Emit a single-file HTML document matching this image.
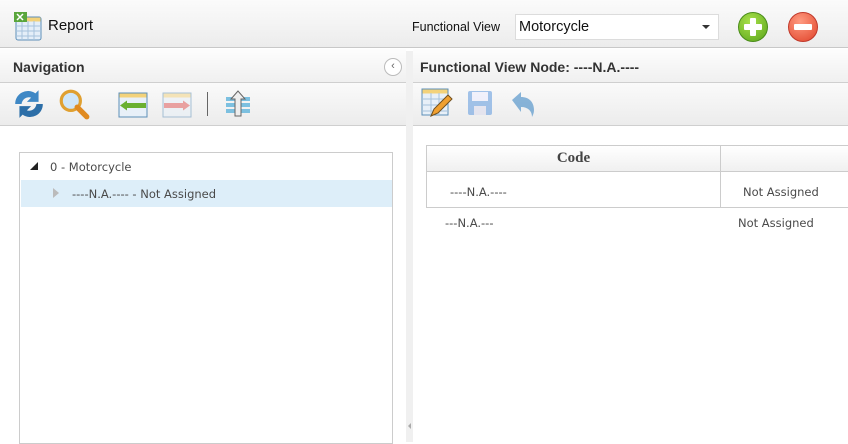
<!DOCTYPE html>
<html><head><style>
*{box-sizing:border-box;margin:0;padding:0}
body{width:848px;height:442px;overflow:hidden;background:#fff;font-family:"Liberation Sans",sans-serif;position:relative}
.a{position:absolute}
.top{left:0;top:0;width:848px;height:48px;background:linear-gradient(#fbfbfb,#ececec);border-bottom:1px solid #c8c8c8}
.hdr{background:linear-gradient(#fdfdfd,#f0f0f0);border-bottom:1px solid #cfcfcf}
.tb{background:linear-gradient(#fafafa,#ececec);border-bottom:1px solid #cfcfcf}
.t{color:#4a4a4a;font-family:"DejaVu Sans","Liberation Sans",sans-serif;font-size:11.5px}
</style></head><body>
<div class="a top"></div>
<svg class="a" style="left:13px;top:11px" width="30" height="30" viewBox="0 0 30 30">
<rect x="3" y="6" width="25" height="23" rx="2" fill="#e4eef8" stroke="#5d8fb8"/>
<rect x="3.5" y="6.5" width="24" height="4" fill="#f3d27a"/>
<g stroke="#a6c2dc"><line x1="3" y1="15" x2="28" y2="15"/><line x1="3" y1="20" x2="28" y2="20"/><line x1="3" y1="25" x2="28" y2="25"/><line x1="9" y1="10" x2="9" y2="29"/><line x1="15" y1="10" x2="15" y2="29"/><line x1="21" y1="10" x2="21" y2="29"/></g>
<rect x="1" y="1" width="13" height="10" fill="#5aa63c"/><path d="M4 3l6 6M10 3l-6 6" stroke="#fff" stroke-width="1.5"/>
</svg>
<div class="a" style="left:48px;top:17px;font-size:15px;color:#111">Report</div>
<div class="a" style="left:412px;top:20px;font-size:12.5px;color:#111">Functional View</div>
<div class="a" style="left:515px;top:14px;width:204px;height:26px;background:#fff;border:1px solid #dcdcdc;font-size:14.5px;padding:4px 0 0 3px;color:#111">Motorcycle</div>
<div class="a" style="left:702px;top:25px;border-left:4px solid transparent;border-right:4px solid transparent;border-top:4px solid #333"></div>
<div class="a" style="left:738px;top:12px;width:30px;height:30px;border-radius:50%;background:radial-gradient(circle at 40% 30%,#a8e04a,#5aa51a);border:1px solid #4a8c1a"></div>
<div class="a" style="left:750px;top:18px;width:6px;height:18px;background:#fff;border-radius:1px"></div>
<div class="a" style="left:744px;top:24px;width:18px;height:6px;background:#fff;border-radius:1px"></div>
<div class="a" style="left:788px;top:12px;width:30px;height:30px;border-radius:50%;background:radial-gradient(circle at 40% 30%,#ff9a80,#e0432a);border:1px solid #c0392b"></div>
<div class="a" style="left:794px;top:24px;width:18px;height:6px;background:#fff;border-radius:1px"></div>

<div class="a hdr" style="left:0;top:49px;width:406px;height:34px"></div>
<div class="a" style="left:13px;top:59px;font-size:14px;font-weight:bold;color:#333">Navigation</div>
<div class="a" style="left:384px;top:58px;width:18px;height:18px;border-radius:50%;border:1px solid #bbb;background:#fff;font-size:11px;color:#666;text-align:center;line-height:15px">&lsaquo;</div>
<div class="a tb" style="left:0;top:83px;width:406px;height:43px"></div>
<svg class="a" style="left:12px;top:87px" width="34" height="34" viewBox="0 0 32 32"><path d="M3 16a12 12 0 0 1 19-10l3-3v11h-11l4-4a7 7 0 0 0-9 6z" fill="#3f88c5"/><path d="M29 16a12 12 0 0 1-19 10l-3 3v-11h11l-4 4a7 7 0 0 0 9-6z" fill="#2d6fa8"/></svg>
<svg class="a" style="left:57px;top:87px" width="34" height="34" viewBox="0 0 32 32"><circle cx="13" cy="13" r="9" fill="#cfe6f8" stroke="#e0a030" stroke-width="3"/><path d="M19 19l9 9" stroke="#e08a20" stroke-width="5" stroke-linecap="round"/></svg>
<svg class="a" style="left:118px;top:92px" width="30" height="26" viewBox="0 0 30 26"><rect x="1" y="1" width="28" height="24" fill="#e8f0f8" stroke="#5d8fb8"/><rect x="1.5" y="1.5" width="27" height="4" fill="#f3d27a"/><rect x="8" y="11" width="20" height="5" fill="#6ab030"/><path d="M2 13.5l7-5v10z" fill="#6ab030"/></svg>
<svg class="a" style="left:162px;top:92px" width="30" height="26" viewBox="0 0 30 26" opacity=".5"><rect x="1" y="1" width="28" height="24" fill="#e8f0f8" stroke="#5d8fb8"/><rect x="1.5" y="1.5" width="27" height="4" fill="#f3d27a"/><rect x="2" y="11" width="20" height="5" fill="#e05050"/><path d="M28 13.5l-7-5v10z" fill="#e05050"/></svg>
<div class="a" style="left:207px;top:92px;width:1px;height:24px;background:#666"></div>
<svg class="a" style="left:223px;top:89px" width="30" height="30" viewBox="0 0 30 30"><g fill="#7cc0e0"><rect x="3" y="8" width="24" height="4"/><rect x="3" y="14" width="24" height="4"/><rect x="3" y="20" width="24" height="4"/></g><path d="M15 2l-7 8h4v17h6v-17h4z" fill="#eee" stroke="#666"/></svg>
<div class="a" style="left:19px;top:152px;width:374px;height:292px;border:1px solid #ccc;background:#fff"></div>
<div class="a" style="left:30px;top:162px;border-left:8px solid transparent;border-bottom:8px solid #222"></div>
<div class="a t" style="left:50px;top:160px">0 - Motorcycle</div>
<div class="a" style="left:21px;top:180px;width:371px;height:27px;background:#ddeef9"></div>
<div class="a" style="left:53px;top:188px;border-top:5px solid transparent;border-bottom:5px solid transparent;border-left:6px solid #bbb"></div>
<div class="a t" style="left:72px;top:187px">----N.A.---- - Not Assigned</div>

<div class="a" style="left:406px;top:51px;width:7px;height:391px;background:#f0f0f0"></div>
<div class="a" style="left:408px;top:423px;border-top:3px solid transparent;border-bottom:3px solid transparent;border-right:3px solid #aaa"></div>

<div class="a hdr" style="left:413px;top:49px;width:435px;height:34px"></div>
<div class="a" style="left:420px;top:59px;font-size:14px;font-weight:bold;color:#333">Functional View Node: ----N.A.----</div>
<div class="a tb" style="left:413px;top:83px;width:435px;height:43px"></div>
<svg class="a" style="left:421px;top:88px" width="32" height="30" viewBox="0 0 32 30"><rect x="1" y="1" width="26" height="26" fill="#e8f0f8" stroke="#5d8fb8"/><rect x="1.5" y="1.5" width="25" height="4" fill="#f3d27a"/><g stroke="#a6c2dc"><line x1="1" y1="11" x2="27" y2="11"/><line x1="1" y1="17" x2="27" y2="17"/><line x1="1" y1="23" x2="27" y2="23"/><line x1="10" y1="5" x2="10" y2="27"/><line x1="18" y1="5" x2="18" y2="27"/></g><path d="M10 28l3-7 14-14 4 4-14 14z" fill="#f0a030" stroke="#705020"/></svg>
<svg class="a" style="left:467px;top:90px" width="26" height="26" viewBox="0 0 26 26" opacity=".6"><rect x="1" y="1" width="24" height="24" rx="2" fill="#6aa0e0"/><rect x="5" y="2" width="16" height="9" fill="#eef"/><rect x="7" y="16" width="12" height="9" fill="#dde"/></svg>
<svg class="a" style="left:510px;top:90px" width="26" height="28" viewBox="0 0 26 28" opacity=".6"><path d="M2 10l9-8v5c8 0 13 5 13 13 0 3-1 5-2 7 0-6-4-10-11-10v5z" fill="#3f88c5"/></svg>
<div class="a" style="left:426px;top:145px;width:430px;height:63px;border:1px solid #ccc;background:#fff"></div>
<div class="a" style="left:427px;top:146px;width:422px;height:26px;background:linear-gradient(#fff,#f0f0f0);border-bottom:1px solid #ccc"></div>
<div class="a" style="left:720px;top:146px;width:1px;height:61px;background:#ccc"></div>
<div class="a" style="left:427px;top:150px;width:293px;text-align:center;font-family:'Liberation Serif',serif;font-weight:bold;font-size:15px;color:#444">Code</div>
<div class="a t" style="left:450px;top:185px">----N.A.----</div>
<div class="a t" style="left:743px;top:185px">Not Assigned</div>
<div class="a t" style="left:445px;top:216px">---N.A.---</div>
<div class="a t" style="left:738px;top:216px">Not Assigned</div>
</body></html>
